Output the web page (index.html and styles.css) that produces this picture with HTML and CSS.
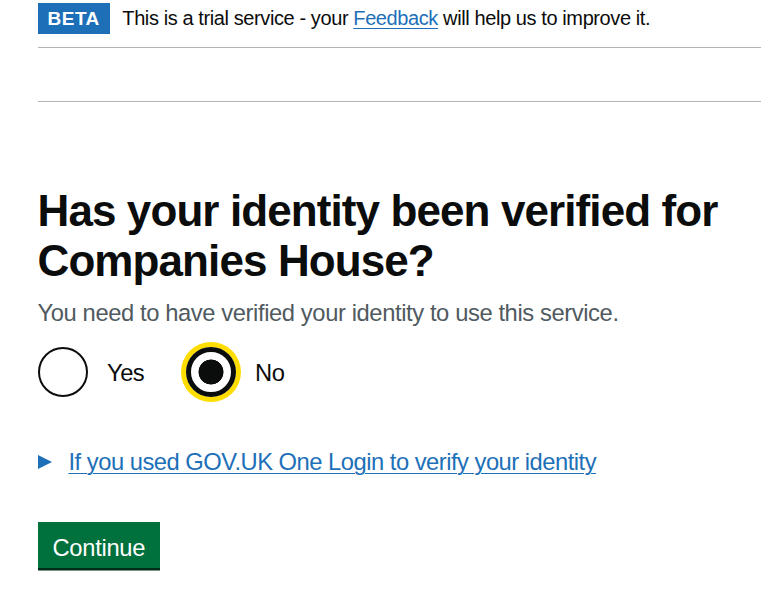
FILE: index.html
```html
<!DOCTYPE html>
<html lang="en">
<head>
<meta charset="utf-8">
<title>Has your identity been verified for Companies House?</title>
<link rel="stylesheet" href="styles.css">
</head>
<body>
<div class="page">
  <div class="phase-banner">
    <strong class="tag">Beta</strong>
    <span class="phase-text">This is a trial service - your <a href="#" class="link">Feedback</a> will help us to improve it.</span>
  </div>
  <div class="nav-rule"></div>
  <main class="main">
    <form class="form">
      <fieldset class="fieldset">
        <legend class="legend"><h1 class="heading">Has your identity been verified for Companies House?</h1></legend>
        <div class="hint">You need to have verified your identity to use this service.</div>
        <div class="radios">
          <label class="radio">
            <input class="radio-input" type="radio" name="verified" value="yes">
            <span class="radio-label">Yes</span>
          </label>
          <label class="radio">
            <input class="radio-input is-focused" type="radio" name="verified" value="no" checked>
            <span class="radio-label">No</span>
          </label>
        </div>
      </fieldset>
      <details class="details">
        <summary class="summary"><span class="summary-text">If you used GOV.UK One Login to verify your identity</span></summary>
      </details>
      <button class="button" type="submit">Continue</button>
    </form>
  </main>
</div>
</body>
</html>
```

FILE: styles.css
```css
html, body {
  margin: 0;
  padding: 0;
  background: #ffffff;
}

body {
  font-family: "Liberation Sans", Arial, sans-serif;
  color: #0b0c0c;
}

.page {
  padding-left: 37.5px;
}

.phase-banner {
  display: flex;
  align-items: baseline;
  padding: 3px 0 12.5px;
  border-bottom: 1px solid #b1b4b6;
}

.tag {
  display: inline-block;
  background: #1d70b8;
  color: #ffffff;
  font-weight: 700;
  font-size: 19px;
  line-height: 20px;
  letter-spacing: 0.5px;
  text-transform: uppercase;
  padding: 6.25px 10px 5px;
  margin-right: 12.5px;
}

.phase-text {
  font-size: 20px;
  line-height: 25px;
  letter-spacing: -0.4px;
}

.link {
  color: #1d70b8;
  text-decoration: underline;
  text-decoration-thickness: 1.25px;
  text-underline-offset: 0.1578em;
}

.nav-rule {
  height: 53px;
  border-bottom: 1px solid #b1b4b6;
}

.main {
  padding: 84px 37.5px 40px 0;
}

.form {
  margin: 0;
}

.fieldset {
  margin: 0 0 49.4px;
  padding: 0;
  border: 0;
  min-width: 0;
}

.legend {
  padding: 0;
  margin: 0 0 11px;
}

.heading {
  margin: 0;
  font-size: 44px;
  line-height: 50px;
  font-weight: 700;
  letter-spacing: -0.9px;
  max-width: 700px;
}

.hint {
  color: #505a5f;
  font-size: 23.75px;
  line-height: 31.25px;
  letter-spacing: -0.4px;
  margin-bottom: 18.75px;
}

.radios {
  display: flex;
  align-items: flex-start;
}

.radio {
  display: flex;
  align-items: flex-start;
  margin-right: 22.5px;
  cursor: pointer;
}

.radio-input {
  -webkit-appearance: none;
  appearance: none;
  box-sizing: border-box;
  width: 50px;
  height: 50px;
  margin: 0;
  border: 2.5px solid #0b0c0c;
  border-radius: 50%;
  background: #ffffff;
  flex: none;
}

.radio-input:checked {
  background: radial-gradient(circle, #0b0c0c 0, #0b0c0c 12.2px, #ffffff 12.8px);
}

.radio-input.is-focused {
  border-width: 5px;
  box-shadow: 0 0 0 5px #ffdd00;
  outline: none;
}

.radio-label {
  font-size: 23.75px;
  line-height: 31.25px;
  letter-spacing: -0.5px;
  padding: 10px 18.75px 6.25px 19.5px;
}

.details {
  margin: 0 0 45px;
}

.summary {
  display: flex;
  align-items: center;
  list-style: none;
  cursor: pointer;
  color: #1d70b8;
  font-size: 23.75px;
  line-height: 31.25px;
}

.summary::-webkit-details-marker {
  display: none;
}

.summary::before {
  content: "";
  flex: none;
  width: 0;
  height: 0;
  border-style: solid;
  border-color: transparent transparent transparent #1d70b8;
  border-width: 7px 0 7px 14px;
  margin-right: 17px;
}

.summary-text {
  text-decoration: underline;
  text-decoration-thickness: 1.25px;
  text-underline-offset: 0.14em;
  letter-spacing: -0.5px;
}

.button {
  display: block;
  margin: 0;
  border: 0;
  border-radius: 0;
  background: #00703c;
  color: #ffffff;
  font-family: "Liberation Sans", Arial, sans-serif;
  font-size: 23.75px;
  line-height: 23.75px;
  letter-spacing: -0.3px;
  padding: 13.3px 15px 8.35px;
  box-shadow: 0 2.5px 0 #002d18;
  cursor: pointer;
}
```
